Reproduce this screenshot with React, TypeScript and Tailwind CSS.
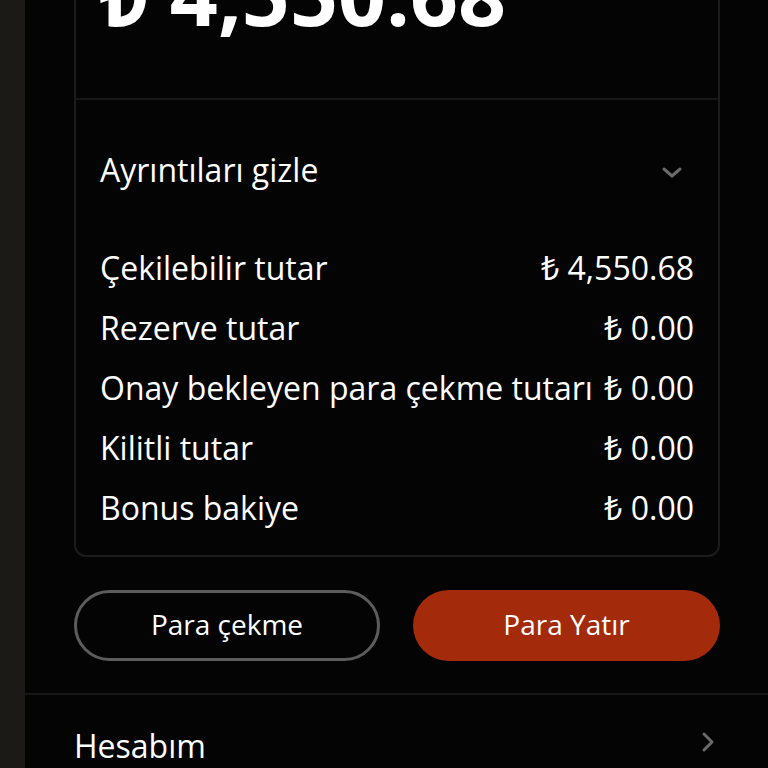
import React from "react";

const rows: [string, string][] = [
  ["Çekilebilir tutar", "₺ 4,550.68"],
  ["Rezerve tutar", "₺ 0.00"],
  ["Onay bekleyen para çekme tutarı", "₺ 0.00"],
  ["Kilitli tutar", "₺ 0.00"],
  ["Bonus bakiye", "₺ 0.00"],
];

export default function App() {
  return (
    <div
      className="w-[768px] h-[768px] overflow-hidden flex bg-[#040404] text-white"
      style={{ fontFamily: '"Open Sans", "Noto Sans", sans-serif' }}
    >
      <div className="w-[25px] shrink-0 bg-[#1c1a17]" />
      <div className="flex-1 flex flex-col">
        <div className="ml-[49px] w-[646px] -mt-[60px] border-2 border-[#1c1c1c] rounded-[12px] flex flex-col">
          <div className="h-[158px] border-b-2 border-[#161616] px-[24px] flex items-start">
            <div className="mt-[10px] text-[84px] leading-[84px] font-bold whitespace-nowrap">₺ 4,550.68</div>
          </div>
          <div className="px-[24px] pt-[44px] pb-[17px] flex flex-col">
            <div className="flex items-center justify-between h-[52px]">
              <span className="text-[32px]">Ayrıntıları gizle</span>
              <svg width="24" height="16" viewBox="0 0 24 16" className="mr-[10px] mt-[6px]">
                <path d="M4 4 L12 11 L20 4" stroke="#6a6a6a" strokeWidth="3" fill="none" strokeLinecap="round" strokeLinejoin="round" />
              </svg>
            </div>
            <div className="mt-[42px] flex flex-col">
              {rows.map(([k, v]) => (
                <div key={k} className="flex items-center justify-between h-[60px]">
                  <span className="text-[32px] whitespace-nowrap">{k}</span>
                  <span className="text-[32px] whitespace-nowrap">{v}</span>
                </div>
              ))}
            </div>
          </div>
        </div>
        <div className="ml-[49px] w-[646px] mt-[33px] flex gap-[33px]">
          <button className="w-[306px] h-[71px] rounded-full border-[3px] border-[#5c5c5c] text-[28px] flex items-center justify-center pb-[4px]">
            Para çekme
          </button>
          <button className="w-[307px] h-[71px] rounded-full bg-[#a32a0a] text-[28px] flex items-center justify-center pb-[4px]">
            Para Yatır
          </button>
        </div>
        <div className="mt-[32px] border-t-2 border-[#171717]" />
        <div className="ml-[49px] w-[646px] mt-[27px] flex items-center justify-between h-[56px]">
          <span className="text-[32px]">Hesabım</span>
          <svg width="16" height="26" viewBox="0 0 16 26" className="mr-[4px] -mt-[8px]">
            <path d="M4 5 L12 13 L4 21" stroke="#6a6a6a" strokeWidth="3" fill="none" strokeLinecap="round" strokeLinejoin="round" />
          </svg>
        </div>
      </div>
    </div>
  );
}
